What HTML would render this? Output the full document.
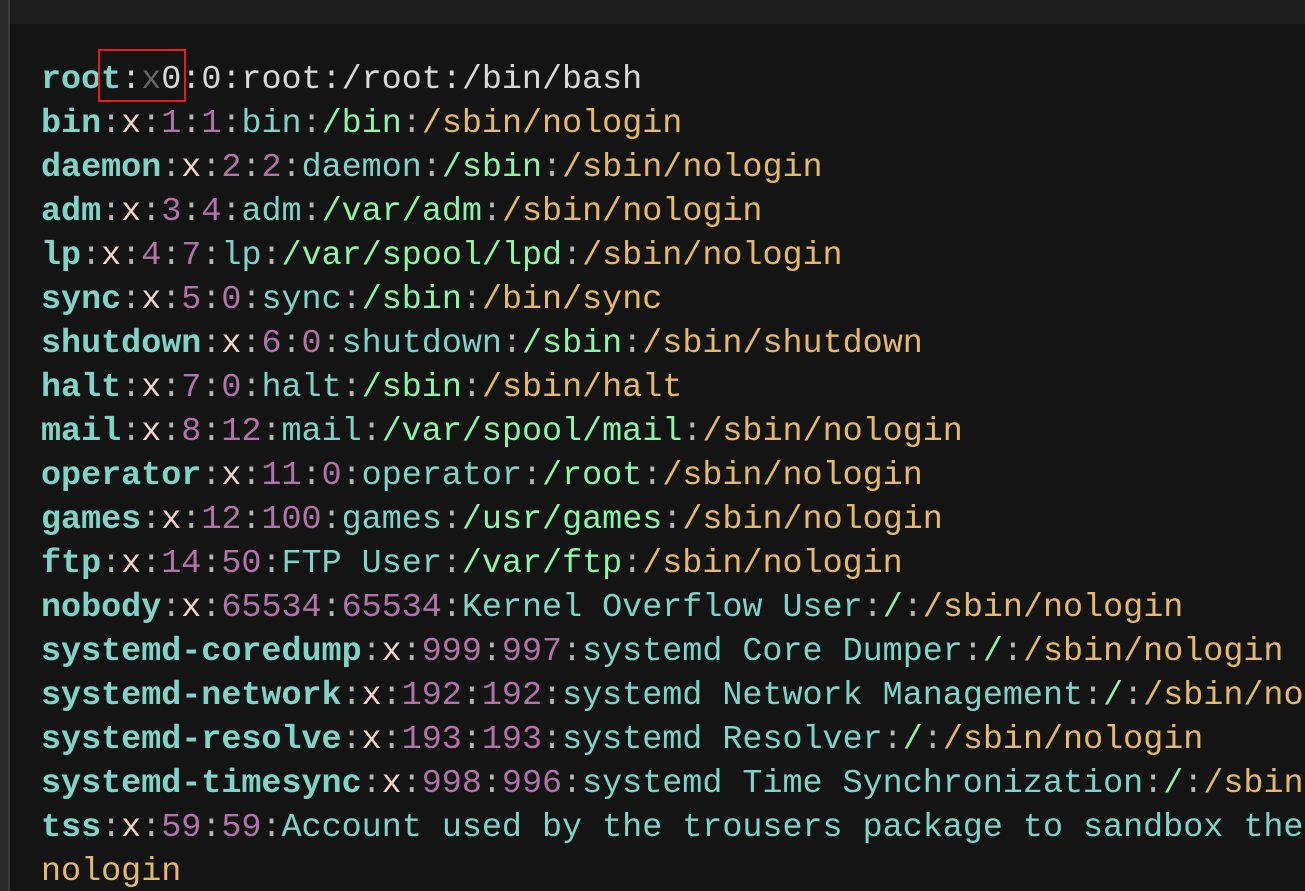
<!DOCTYPE html>
<html><head><meta charset="utf-8"><style>
html,body{margin:0;padding:0;width:1305px;height:891px;overflow:hidden;background:#141414}
.top{position:absolute;left:0;top:0;width:1305px;height:24px;background:#1f1f1f}
.lb{position:absolute;left:0;top:0;width:8px;height:891px;background:#2a2a2a;border-right:2px solid #3a3a3a}
.wrap{position:absolute;left:0;top:0;width:1305px;height:891px;overflow:hidden}
pre{position:absolute;left:41px;top:58px;width:1264px;overflow:hidden;margin:0;font-family:"Liberation Mono","DejaVu Sans Mono",monospace;font-size:33.4px;line-height:44px;color:#7fd4c8;white-space:pre}
.u{font-weight:bold;color:#7fd4c8}.c{color:#b4b4b4}.x{color:#f5d3c8}.n{color:#b372a9}.g{color:#7fd4c8}.d{color:#8cf5a6}.s{color:#e6b86c}.w{color:#d8d8d8}
.box{position:absolute;left:98px;top:49px;width:88px;height:53px;border:2px solid #e81c1c;box-sizing:border-box}
</style></head><body>
<div class="top"></div><div class="lb"></div>
<div class="wrap">
<pre><span class="u">root</span><span class="w">:</span><span class="w" style="color:#666">x</span><span class="w">0:0:root:/root:/bin/bash</span>
<span class="u">bin</span><span class="c">:</span><span class="x">x</span><span class="c">:</span><span class="n">1</span><span class="c">:</span><span class="n">1</span><span class="c">:</span><span class="g">bin</span><span class="c">:</span><span class="d">/bin</span><span class="c">:</span><span class="s">/sbin/nologin</span>
<span class="u">daemon</span><span class="c">:</span><span class="x">x</span><span class="c">:</span><span class="n">2</span><span class="c">:</span><span class="n">2</span><span class="c">:</span><span class="g">daemon</span><span class="c">:</span><span class="d">/sbin</span><span class="c">:</span><span class="s">/sbin/nologin</span>
<span class="u">adm</span><span class="c">:</span><span class="x">x</span><span class="c">:</span><span class="n">3</span><span class="c">:</span><span class="n">4</span><span class="c">:</span><span class="g">adm</span><span class="c">:</span><span class="d">/var/adm</span><span class="c">:</span><span class="s">/sbin/nologin</span>
<span class="u">lp</span><span class="c">:</span><span class="x">x</span><span class="c">:</span><span class="n">4</span><span class="c">:</span><span class="n">7</span><span class="c">:</span><span class="g">lp</span><span class="c">:</span><span class="d">/var/spool/lpd</span><span class="c">:</span><span class="s">/sbin/nologin</span>
<span class="u">sync</span><span class="c">:</span><span class="x">x</span><span class="c">:</span><span class="n">5</span><span class="c">:</span><span class="n">0</span><span class="c">:</span><span class="g">sync</span><span class="c">:</span><span class="d">/sbin</span><span class="c">:</span><span class="s">/bin/sync</span>
<span class="u">shutdown</span><span class="c">:</span><span class="x">x</span><span class="c">:</span><span class="n">6</span><span class="c">:</span><span class="n">0</span><span class="c">:</span><span class="g">shutdown</span><span class="c">:</span><span class="d">/sbin</span><span class="c">:</span><span class="s">/sbin/shutdown</span>
<span class="u">halt</span><span class="c">:</span><span class="x">x</span><span class="c">:</span><span class="n">7</span><span class="c">:</span><span class="n">0</span><span class="c">:</span><span class="g">halt</span><span class="c">:</span><span class="d">/sbin</span><span class="c">:</span><span class="s">/sbin/halt</span>
<span class="u">mail</span><span class="c">:</span><span class="x">x</span><span class="c">:</span><span class="n">8</span><span class="c">:</span><span class="n">12</span><span class="c">:</span><span class="g">mail</span><span class="c">:</span><span class="d">/var/spool/mail</span><span class="c">:</span><span class="s">/sbin/nologin</span>
<span class="u">operator</span><span class="c">:</span><span class="x">x</span><span class="c">:</span><span class="n">11</span><span class="c">:</span><span class="n">0</span><span class="c">:</span><span class="g">operator</span><span class="c">:</span><span class="d">/root</span><span class="c">:</span><span class="s">/sbin/nologin</span>
<span class="u">games</span><span class="c">:</span><span class="x">x</span><span class="c">:</span><span class="n">12</span><span class="c">:</span><span class="n">100</span><span class="c">:</span><span class="g">games</span><span class="c">:</span><span class="d">/usr/games</span><span class="c">:</span><span class="s">/sbin/nologin</span>
<span class="u">ftp</span><span class="c">:</span><span class="x">x</span><span class="c">:</span><span class="n">14</span><span class="c">:</span><span class="n">50</span><span class="c">:</span><span class="g">FTP User</span><span class="c">:</span><span class="d">/var/ftp</span><span class="c">:</span><span class="s">/sbin/nologin</span>
<span class="u">nobody</span><span class="c">:</span><span class="x">x</span><span class="c">:</span><span class="n">65534</span><span class="c">:</span><span class="n">65534</span><span class="c">:</span><span class="g">Kernel Overflow User</span><span class="c">:</span><span class="d">/</span><span class="c">:</span><span class="s">/sbin/nologin</span>
<span class="u">systemd-coredump</span><span class="c">:</span><span class="x">x</span><span class="c">:</span><span class="n">999</span><span class="c">:</span><span class="n">997</span><span class="c">:</span><span class="g">systemd Core Dumper</span><span class="c">:</span><span class="d">/</span><span class="c">:</span><span class="s">/sbin/nologin</span>
<span class="u">systemd-network</span><span class="c">:</span><span class="x">x</span><span class="c">:</span><span class="n">192</span><span class="c">:</span><span class="n">192</span><span class="c">:</span><span class="g">systemd Network Management</span><span class="c">:</span><span class="d">/</span><span class="c">:</span><span class="s">/sbin/no</span>
<span class="u">systemd-resolve</span><span class="c">:</span><span class="x">x</span><span class="c">:</span><span class="n">193</span><span class="c">:</span><span class="n">193</span><span class="c">:</span><span class="g">systemd Resolver</span><span class="c">:</span><span class="d">/</span><span class="c">:</span><span class="s">/sbin/nologin</span>
<span class="u">systemd-timesync</span><span class="c">:</span><span class="x">x</span><span class="c">:</span><span class="n">998</span><span class="c">:</span><span class="n">996</span><span class="c">:</span><span class="g">systemd Time Synchronization</span><span class="c">:</span><span class="d">/</span><span class="c">:</span><span class="s">/sbin</span>
<span class="u">tss</span><span class="c">:</span><span class="x">x</span><span class="c">:</span><span class="n">59</span><span class="c">:</span><span class="n">59</span><span class="c">:</span><span class="g">Account used by the trousers package to sandbox the</span>
<span class="s">nologin</span></pre>
</div>
<div class="box"></div>
</body></html>
